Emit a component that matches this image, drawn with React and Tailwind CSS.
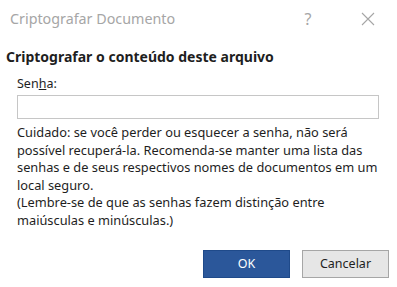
export default function App() {
  return (
    <div
      className="w-[397px] h-[287px] bg-white flex flex-col overflow-hidden text-[#1e1e1e]"
      style={{ fontFamily: '"Noto Sans", "Open Sans", sans-serif' }}
    >
      {/* Title bar */}
      <div className="h-[37px] flex items-center pl-[10px] pr-[20px]">
        <span className="text-[14.3px] text-[#a6a6a6] flex-1">Criptografar Documento</span>
        <span className="text-[16px] text-[#a6a6a6] w-[14px] mr-[46px] text-center">?</span>
        <svg width="14" height="14" viewBox="0 0 14 14" className="mr-[2px]">
          <path d="M1 1 L13 13 M13 1 L1 13" stroke="#a6a6a6" strokeWidth="1.1" fill="none" />
        </svg>
      </div>

      <h1 className="pl-[6px] mt-[10px] text-[14px] font-bold leading-[20px]">
        Criptografar o conteúdo deste arquivo
      </h1>

      <div className="px-[17px] pr-[18px] mt-[9px]">
        <label className="block text-[12.5px] leading-[16px]">
          Sen<span className="underline">h</span>a:
        </label>
        <input
          type="password"
          className="block w-full h-[24px] mt-[3px] border border-[#c6c6c6] outline-none"
        />
        <p className="mt-[5px] mr-[-6px] text-[12.8px] leading-[17.5px]">
          Cuidado: se você perder ou esquecer a senha, não será possível recuperá-la. Recomenda-se
          manter uma lista das senhas e de seus respectivos nomes de documentos em um local seguro.
          <br />
          (Lembre-se de que as senhas fazem distinção entre maiúsculas e minúsculas.)
        </p>
      </div>

      <div className="mt-auto mb-[9px] flex justify-end gap-[12px] pr-[8px]">
        <button className="w-[87px] h-[28px] bg-[#2b579a] border border-[#1f4a8a] text-white text-[12.5px]">
          OK
        </button>
        <button className="w-[87px] h-[28px] bg-[#e6e6e6] border border-[#a6a6a6] text-[12.5px]">
          Cancelar
        </button>
      </div>
    </div>
  );
}
